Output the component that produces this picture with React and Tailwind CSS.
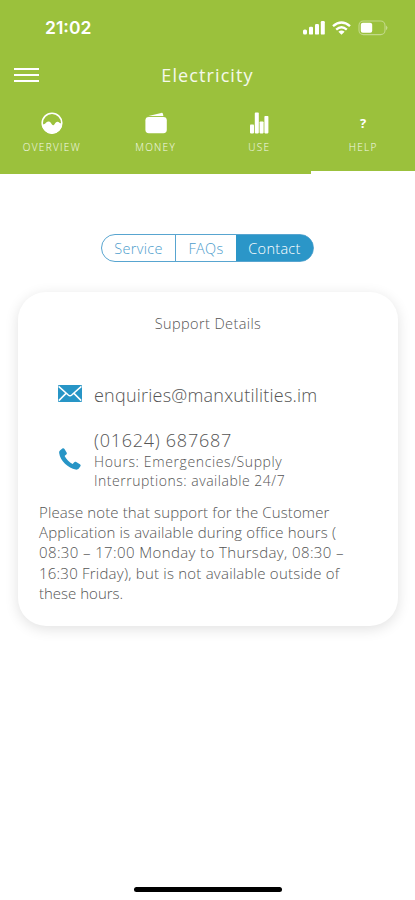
import React from 'react';

const OverviewIcon = () => (
  <svg width="22" height="22" viewBox="0 0 22 22" fill="none">
    <circle cx="11" cy="11" r="9.8" stroke="white" strokeWidth="1.6" />
    <path d="M1 12.4 C3.4 12.8 4.2 11.6 5.2 10.6 C6.8 9 8.6 9 9.8 10.8 C10.8 12.4 11.4 13.4 12.4 13.2 C13.8 12.9 14.4 9.8 16.4 9.8 C18.2 9.8 18.8 11.8 21 11.6 A10 10 0 0 1 1 12.4 Z" fill="white" />
  </svg>
);

const MoneyIcon = () => (
  <svg width="22" height="22" viewBox="0 0 22 22" fill="white">
    <path d="M2.4 4.2 L16.2 .9 Q17.6 .6 18 2 L18.4 4.2 Z" />
    <rect x=".4" y="5" width="21.4" height="16.2" rx="3.4" />
    <path d="M3 4.5 H18.8" stroke="#9bc13c" strokeWidth=".7" />
  </svg>
);

const UseIcon = () => (
  <svg width="20" height="22" viewBox="0 0 20 22" fill="white">
    <rect x="1" y="12.4" width="4" height="9" rx=".8" />
    <rect x="5.8" y=".6" width="4" height="20.8" rx=".8" />
    <rect x="10.6" y="9.4" width="4" height="12" rx=".8" />
    <rect x="15.4" y="4" width="4" height="17.4" rx=".8" />
  </svg>
);

const HelpIcon = () => <span className="text-[13px] leading-none font-bold">?</span>;

const tabs = [
  { label: 'OVERVIEW', Icon: OverviewIcon },
  { label: 'MONEY', Icon: MoneyIcon },
  { label: 'USE', Icon: UseIcon },
  { label: 'HELP', Icon: HelpIcon, active: true },
];

const StatusBar = () => (
  <div className="flex h-14 items-center justify-between pl-[45px] pr-[27px]">
    <span className="font-['Inter',sans-serif] text-[17.5px] font-semibold leading-5">21:02</span>
    <div className="flex items-center">
      <svg width="22" height="14" viewBox="0 0 22 14" fill="white">
        <rect x="0" y="8.4" width="4" height="5.2" rx="1.6" />
        <rect x="6" y="5.8" width="4" height="7.8" rx="1.2" />
        <rect x="12" y="3" width="4" height="10.6" rx="1.2" />
        <rect x="17.8" y="0" width="4" height="13.6" rx="1.2" />
      </svg>
      <svg className="ml-[7px]" width="19" height="14" viewBox="0 0 19 14" fill="none" stroke="white" strokeWidth="2.4">
        <path d="M1 5.2 Q9.5 -2.2 18 5.2" />
        <path d="M4.2 8.6 Q9.5 4 14.8 8.6" />
        <path d="M6.4 10.7 Q9.5 8.3 12.6 10.7 L9.5 13.8 Z" fill="white" stroke="none" />
      </svg>
      <svg className="ml-[7px]" width="30" height="16" viewBox="0 0 30 16" fill="none">
        <rect x="1" y="1" width="26" height="13.6" rx="4.4" stroke="white" strokeOpacity=".4" strokeWidth="1.1" />
        <path d="M28.2 5.4 Q30.6 7.8 28.2 10.2 Z" fill="white" fillOpacity=".5" />
        <rect x="2.8" y="2.8" width="11.4" height="10" rx="2" fill="white" />
      </svg>
    </div>
  </div>
);

const MailIcon = () => (
  <svg width="24" height="17" viewBox="0 0 24 17" fill="none">
    <rect width="24" height="17" rx="1" fill="#2795c6" />
    <path d="M.6 1.4 L10.3 10 Q12 11.4 13.7 10 L23.4 1.4 M.8 15.6 L8 8.4 M23.2 15.6 L16 8.4" stroke="white" strokeWidth="1.5" />
  </svg>
);

const PhoneIcon = () => (
  <svg width="22" height="22" viewBox="0 0 22 22" fill="#2795c6">
    <path d="M1.2 2.2 L3.4 .5 C4.2 0 5 .2 5.5 1 L7.6 4.4 C8 5.2 7.9 6 7.2 6.6 L5.6 8 C7.2 11.2 10.2 14.2 13.6 16 L15 14.4 C15.6 13.8 16.4 13.6 17.2 14 L20.9 16.2 C21.7 16.7 21.9 17.5 21.4 18.3 L19.8 20.6 C19 21.6 17.8 21.8 16.6 21.6 C13 20.9 9.2 18.8 6 15.8 C2.8 12.6 .7 8.8 .2 5.2 C0 4 .2 3 1.2 2.2 Z" />
  </svg>
);

const Header = () => (
  <header className="h-[174px] bg-[#9bc13c] text-white">
    <StatusBar />
    <div className="grid h-[38px] grid-cols-[1fr_auto_1fr] items-center">
      <button type="button" aria-label="Menu" className="flex w-[25px] flex-col gap-1 ml-[14px]">
        <span className="h-0.5 bg-white" />
        <span className="h-0.5 bg-white" />
        <span className="h-0.5 bg-white" />
      </button>
      <h1 className="text-[18px] leading-6 font-normal tracking-[1.1px] text-white/90">Electricity</h1>
    </div>
    <nav className="grid h-20 grid-cols-4">
      {tabs.map(({ label, Icon, active }) => (
        <div
          key={label}
          className={`flex flex-col items-center pt-[18px] ${active ? 'border-b-[3px] border-white' : ''}`}
        >
          <div className="flex h-[22px] items-center">
            <Icon />
          </div>
          <span className="mt-[7px] text-[10px] leading-3 tracking-[1.3px] text-white/90">{label}</span>
        </div>
      ))}
    </nav>
  </header>
);

const App = () => {
  return (
    <div className="flex h-[900px] w-[415px] flex-col bg-white font-['Open_Sans',sans-serif] font-light text-[#555555]">
      <Header />

      <div className="mt-[60px] ml-[101px] flex h-7 w-[213px] overflow-hidden rounded-full border border-[#58a5d0] bg-[linear-gradient(to_right,white_60%,#2b96c8_60%)] text-[14.5px] leading-[27px] tracking-[0.3px] text-[#4c9ccc]">
        <div className="w-[73px] text-center">Service</div>
        <div className="w-[61px] border-l border-[#58a5d0] bg-white text-center">FAQs</div>
        <div className="flex-1 bg-[#2b96c8] text-center text-white">Contact</div>
      </div>

      <main className="mx-[18px] mt-[30px] h-[334px] w-[380px] rounded-[28px] bg-white shadow-[0_3px_14px_rgba(0,0,0,0.12)]">
        <h2 className="pt-[22px] text-center text-[14.5px] leading-5 tracking-[0.4px]">Support Details</h2>
        <div className="mt-[49px] flex h-6 pl-10">
          <div className="mt-0.5">
            <MailIcon />
          </div>
          <span className="ml-3 text-[18px] leading-6 tracking-[0.22px]">enquiries@manxutilities.im</span>
        </div>
        <div className="mt-[21px] flex pl-[41px]">
          <div className="mt-[20px]">
            <PhoneIcon />
          </div>
          <div className="ml-[13px] text-[14px] leading-[19px]">
            <p className="text-[18px] leading-[24px] tracking-[0.75px]">(01624) 687687</p>
            <p className="tracking-[0.62px]">Hours: Emergencies/Supply</p>
            <p className="tracking-[0.52px]">Interruptions: available 24/7</p>
          </div>
        </div>
        <div className="mt-3 pl-[21px] text-[15px] leading-[20.2px] whitespace-nowrap">
          <p className="tracking-[0.12px]">Please note that support for the Customer</p>
          <p className="tracking-[0.15px]">Application is available during office hours (</p>
          <p className="tracking-[0.38px]">08:30 – 17:00 Monday to Thursday, 08:30 –</p>
          <p className="tracking-[0.22px]">16:30 Friday), but is not available outside of</p>
          <p>these hours.</p>
        </div>
      </main>

      <div className="mt-auto mb-2 h-[5px] w-[148px] self-center rounded-full bg-black" />
    </div>
  );
};

export default App;
